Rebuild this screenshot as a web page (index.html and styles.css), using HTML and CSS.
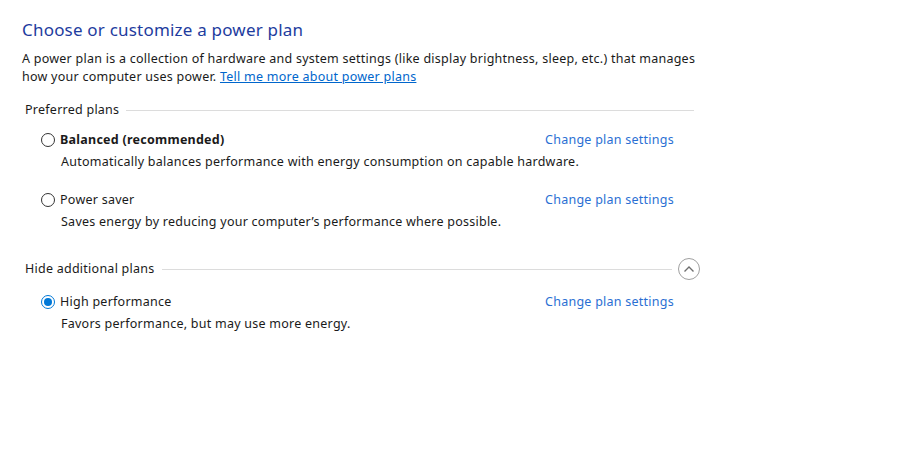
FILE: index.html
```html
<!DOCTYPE html>
<html lang="en">
<head>
<meta charset="utf-8">
<title>Power Options</title>
<link rel="stylesheet" href="styles.css">
</head>
<body>
<main class="page">
  <h1 class="title">Choose or customize a power plan</h1>
  <p class="intro">A power plan is a collection of hardware and system settings (like display brightness, sleep, etc.) that manages how your computer uses power. <a class="link" href="#">Tell me more about power plans</a></p>

  <section class="group">
    <div class="group-head">
      <span class="group-label">Preferred plans</span>
      <span class="rule"></span>
    </div>
    <div class="plan">
      <div class="plan-row">
        <label class="plan-name bold"><span class="radio"></span>Balanced (recommended)</label>
        <a class="plan-link" href="#">Change plan settings</a>
      </div>
      <div class="plan-desc">Automatically balances performance with energy consumption on capable hardware.</div>
    </div>
    <div class="plan">
      <div class="plan-row">
        <label class="plan-name"><span class="radio"></span>Power saver</label>
        <a class="plan-link" href="#">Change plan settings</a>
      </div>
      <div class="plan-desc">Saves energy by reducing your computer’s performance where possible.</div>
    </div>
  </section>

  <section class="group group-extra">
    <div class="group-head">
      <span class="group-label">Hide additional plans</span>
      <span class="rule"></span>
      <span class="collapse">
        <svg width="12" height="8" viewBox="0 0 12 8"><path d="M1.5 6.5 L6 2 L10.5 6.5" fill="none" stroke="#6e6e6e" stroke-width="1.4"/></svg>
      </span>
    </div>
    <div class="plan">
      <div class="plan-row">
        <label class="plan-name"><span class="radio checked"></span>High performance</label>
        <a class="plan-link" href="#">Change plan settings</a>
      </div>
      <div class="plan-desc">Favors performance, but may use more energy.</div>
    </div>
  </section>
</main>
</body>
</html>
```

FILE: styles.css
```css
html, body {
  margin: 0;
  padding: 0;
  background: #ffffff;
}

body {
  font-family: "Noto Sans", "Open Sans", sans-serif;
  font-size: 12.5px;
  letter-spacing: 0.25px;
  color: #1a1a1a;
}

.page {
  width: 672px;
  padding: 18px 0 0 22px;
}

.title {
  margin: 0;
  font-size: 17px;
  letter-spacing: 0.2px;
  font-weight: normal;
  line-height: 24px;
  color: #1e3c9e;
}

.intro {
  margin: 8px -14px 0 0;
  line-height: 18px;
}

.link {
  color: #0066cc;
  text-decoration: underline;
}

.group {
  margin-top: 15px;
}

.group-extra {
  margin-top: 27px;
}

.group-head {
  display: flex;
  align-items: center;
  height: 18px;
  padding-left: 3px;
}

.group-extra .group-head {
  height: 22px;
}

.group-label {
  line-height: 18px;
  white-space: nowrap;
}

.rule {
  flex: 1;
  height: 1px;
  background: #dcdcdc;
  margin-left: 7px;
}

.collapse {
  width: 20px;
  height: 20px;
  border: 1px solid #a0a0a0;
  border-radius: 50%;
  display: flex;
  align-items: center;
  justify-content: center;
  margin-left: 6px;
  margin-right: -6px;
}

.plan {
  padding-left: 19px;
  padding-right: 20px;
  margin-top: 12px;
}

.plan + .plan {
  margin-top: 20px;
}

.group-extra .plan {
  margin-top: 13px;
}

.plan-row {
  display: flex;
  justify-content: space-between;
  align-items: center;
  line-height: 18px;
}

.plan-name {
  display: flex;
  align-items: center;
  color: #1a1a1a;
}

.bold {
  font-weight: bold;
}

.radio {
  width: 12px;
  height: 12px;
  border: 1px solid #333333;
  border-radius: 50%;
  margin-right: 5px;
  box-sizing: content-box;
  position: relative;
}

.radio.checked {
  border-color: #0078d7;
}

.radio.checked::after {
  content: "";
  position: absolute;
  left: 2px;
  top: 2px;
  width: 8px;
  height: 8px;
  border-radius: 50%;
  background: #0078d7;
}

.plan-link {
  color: #2a6fd3;
  text-decoration: none;
}

.plan-desc {
  margin-top: 4px;
  padding-left: 20px;
  line-height: 18px;
}
```
